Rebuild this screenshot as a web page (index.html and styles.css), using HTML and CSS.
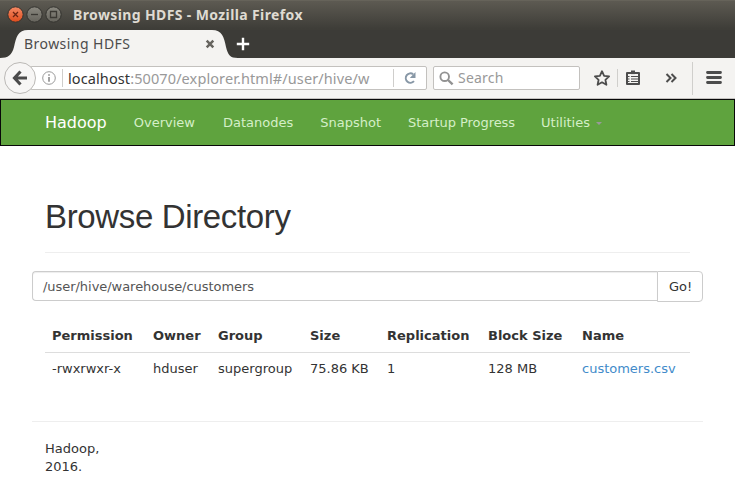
FILE: index.html
```html
<!DOCTYPE html>
<html lang="en">
<head>
<meta charset="utf-8">
<title>Browsing HDFS</title>
<link rel="stylesheet" href="styles.css">
</head>
<body>
<header class="chrome">
  <div class="titlebar">
    <svg class="controls" width="62" height="30" viewBox="0 0 62 30">
      <defs>
        <linearGradient id="orange" x1="0" y1="0" x2="0" y2="1"><stop offset="0" stop-color="#f58a65"/><stop offset="1" stop-color="#df4c1c"/></linearGradient>
        <linearGradient id="grey" x1="0" y1="0" x2="0" y2="1"><stop offset="0" stop-color="#8b8980"/><stop offset="1" stop-color="#65635c"/></linearGradient>
      </defs>
      <g stroke="#33322e">
        <circle cx="15.5" cy="14.5" r="7.7" fill="url(#orange)"/>
        <circle cx="34.5" cy="14.5" r="7.7" fill="url(#grey)"/>
        <circle cx="53.5" cy="14.5" r="7.7" fill="url(#grey)"/>
      </g>
      <g fill="none" stroke="#3b3934" stroke-width="1.3">
        <path d="M13 12l5 5M18 12l-5 5" stroke="#6a2412"/>
        <path d="M31 14.5h7"/>
        <path d="M50.5 11.5h6v6h-6z"/>
      </g>
    </svg>
    <span class="window-title">Browsing HDFS - Mozilla Firefox</span>
  </div>
  <div class="tabs">
    <div class="tab">
      <svg class="tab-shape" width="240" height="28" viewBox="0 0 240 28"><path d="M0 28C8 28 12 25 14 17C16 7 18 0 28 0H212C222 0 224 7 226 17C228 25 230 28 238 28Z" fill="#f4f3f1"/></svg>
      <span class="tab-title">Browsing HDFS</span>
      <svg class="tab-close" width="10" height="10" viewBox="0 0 10 10"><path d="M1.7 1.7l6.6 6.6M8.3 1.7l-6.6 6.6" stroke="#66645f" stroke-width="2.5"/></svg>
    </div>
    <svg class="tab-new" width="14" height="14" viewBox="0 0 14 14"><path d="M7 .8v12.4M.8 7h12.4" stroke="#fff" stroke-width="2.4"/></svg>
  </div>
  <div class="toolbar">
    <div class="back"><svg width="16" height="16" viewBox="0 0 16 16"><path d="M8.5 1.5L2.5 8l6 6.5M2.5 8H15" fill="none" stroke="#4b4b4b" stroke-width="3.1"/></svg></div>
    <div class="address">
      <svg class="info" width="14" height="14" viewBox="0 0 14 14"><circle cx="7" cy="7" r="6.3" fill="none" stroke="#999"/><path d="M7 6v4.8M7 3.2v1.6" stroke="#8a8a8a" stroke-width="1.6"/></svg>
      <span class="url"><b class="host">localhost</b>:50070/explorer.html#/user/hive/w</span>
      <svg class="reload" width="14" height="14" viewBox="0 0 14 14"><path d="M11 10.2A4.7 4.7 0 1 1 10.2 3.2" fill="none" stroke="#8797a6" stroke-width="2"/><path d="M12.5 1v6H6.8z" fill="#8797a6"/></svg>
    </div>
    <div class="search">
      <svg width="15" height="15" viewBox="0 0 15 15"><circle cx="5.7" cy="5.7" r="4.3" fill="none" stroke="#929292" stroke-width="1.9"/><path d="M9 9l4.6 4.4" stroke="#929292" stroke-width="2.4"/></svg>
      <span>Search</span>
    </div>
    <svg class="actions" width="144" height="38" viewBox="0 0 144 38">
      <g fill="none" stroke="#4c4c4c">
        <path d="M11 12.2l2.1 4.6 5 .6-3.7 3.4 1 5-4.4-2.5-4.4 2.5 1-5-3.7-3.4 5-.6z" stroke-width="1.8" stroke-linejoin="round"/>
        <path d="M36 14h12v11H36z" stroke-width="2" stroke-linejoin="round"/>
        <path d="M40 17.5h7M40 20h7M40 22.5h7M37 17.5h1.5M37 20h1.5M37 22.5h1.5" stroke-width="1.1"/>
        <path d="M40 13.3h4" stroke-width="3.6"/>
        <path d="M75.5 15l4 4-4 4M80.5 15l4 4-4 4" stroke-width="2"/>
        <path d="M116.5 13.5h13M116.5 18.5h13M116.5 23.5h13" stroke-width="2.8" stroke-linecap="round"/>
      </g>
      <path d="M26.5 10v18M101.5 3v33" stroke="#d0cfcc"/>
    </svg>
  </div>
</header>
<nav class="navbar">
  <a class="brand">Hadoop</a>
  <a>Overview</a>
  <a>Datanodes</a>
  <a>Snapshot</a>
  <a>Startup Progress</a>
  <a>Utilities<i class="caret"></i></a>
</nav>
<main class="container">
  <h1>Browse Directory</h1>
  <div class="path-form">
    <div class="path">/user/hive/warehouse/customers</div>
    <div class="go">Go!</div>
  </div>
  <table>
    <colgroup><col class="c1"><col class="c2"><col class="c3"><col class="c4"><col class="c5"><col class="c6"><col></colgroup>
    <thead><tr><th>Permission</th><th>Owner</th><th>Group</th><th>Size</th><th>Replication</th><th>Block Size</th><th>Name</th></tr></thead>
    <tbody><tr><td>-rwxrwxr-x</td><td>hduser</td><td>supergroup</td><td>75.86 KB</td><td>1</td><td>128 MB</td><td><a class="file">customers.csv</a></td></tr></tbody>
  </table>
  <footer>Hadoop,<br>2016.</footer>
</main>
</body>
</html>
```
FILE: styles.css
```css
* { box-sizing: border-box; }
body {
  margin: 0;
  height: 491px;
  overflow: hidden;
  background: #fff;
  color: #333;
  font: 13px/18px "DejaVu Sans", sans-serif;
}
svg { display: block; flex: none; }

.chrome { font-family: "Noto Sans", sans-serif; background: #3c3b37; }
.titlebar {
  display: flex;
  align-items: center;
  height: 30px;
  background: linear-gradient(#5d5a52, #3e3d38 95%);
  border-top: 1px solid #66635a;
}
.controls { margin-top: -1px; }
.window-title {
  margin: -2px 0 0 11px;
  font-size: 14px;
  font-weight: 700;
  letter-spacing: .38px;
  color: #dfdbd2;
  white-space: nowrap;
}
.tabs { display: flex; height: 28px; }
.tab { position: relative; display: flex; align-items: center; width: 236px; padding-left: 24px; }
.tab-shape { position: absolute; left: 0; top: 0; }
.tab-title { position: relative; width: 181px; font-size: 14px; letter-spacing: .45px; color: #4c4c4c; }
.tab-close { position: relative; }
.tab-new { margin-top: 7px; }
.toolbar {
  display: flex;
  align-items: center;
  height: 41px;
  padding: 0 0 0 4px;
  background: #f4f3f1;
  border-bottom: 1px solid #c5c3c0;
}
.back {
  position: relative;
  z-index: 1;
  display: grid;
  place-items: center;
  flex: none;
  width: 32px;
  height: 32px;
  border: 1px solid #bbb9b6;
  border-radius: 50%;
  background: #f7f6f5;
}
.address, .search {
  display: flex;
  flex: none;
  align-items: center;
  height: 24px;
  border: 1px solid #c3c1be;
  border-radius: 2px;
  background: #fff;
}
.address { width: 397px; margin-left: -6px; padding-left: 11px; }
.url {
  width: 332px;
  height: 18px;
  margin-left: 6px;
  padding-left: 5px;
  border: solid #cfcecc;
  border-width: 0 1px;
  font-size: 14.5px;
  letter-spacing: .1px;
  color: #999;
  white-space: nowrap;
  overflow: hidden;
}
.host { font-weight: 400; color: #333; }
.reload { margin-left: 9px; }
.search { width: 147px; margin-left: 6px; padding-left: 5px; }
.search span { margin-left: 4px; font-size: 14px; letter-spacing: .2px; color: #999; }
.actions { margin-left: 11px; }

.navbar {
  display: flex;
  align-items: center;
  height: 47px;
  padding-left: 44px;
  border: 1px solid #080808;
  background: #5fa33e;
  color: #d5efc8;
}
.navbar a { margin-right: 27px; white-space: nowrap; }
.navbar a:nth-child(2) { margin-right: 28px; }
.navbar a:nth-child(5) { margin-right: 26px; letter-spacing: -.05px; }
.navbar .brand { font-size: 16px; color: #fff; }
.caret {
  display: inline-block;
  margin-left: 6px;
  vertical-align: 2px;
  border: solid transparent;
  border-width: 3px 3px 0;
  border-top-color: #999;
}

.container { margin: 0 45px; }
h1 {
  margin: 53px 0 18px;
  height: 54px;
  border-bottom: 1px solid #eee;
  font: 400 33px/36px "Liberation Sans", sans-serif;
  letter-spacing: -.35px;
}
.path-form { display: flex; margin: 0 -13px; }
.path {
  flex: 1;
  height: 30px;
  padding: 6px 10px 4px;
  border: 1px solid #ccc;
  border-right: 0;
  border-radius: 4px 0 0 4px;
  box-shadow: inset 0 1px 1px rgba(0, 0, 0, .075);
  letter-spacing: -.04px;
  color: #555;
}
.go {
  width: 46px;
  height: 31px;
  padding: 6px 0 0 11px;
  border: 1px solid #ccc;
  border-radius: 0 4px 4px 0;
}
table { width: 645px; margin-top: 17px; border-collapse: separate; border-spacing: 0; table-layout: fixed; }
th, td { padding: 8px 0 7px 7px; text-align: left; white-space: nowrap; }
th { border-bottom: 1px solid #ddd; }
td { padding: 7px 0 8px 7px; }
.c1 { width: 101px; }
.c2 { width: 65px; }
.c3 { width: 92px; }
.c4 { width: 77px; }
.c5 { width: 101px; }
.c6 { width: 94px; }
.file { color: #428bca; }
footer { margin: 35px -13px 0; padding: 18px 13px 0; border-top: 1px solid #eee; }
```
